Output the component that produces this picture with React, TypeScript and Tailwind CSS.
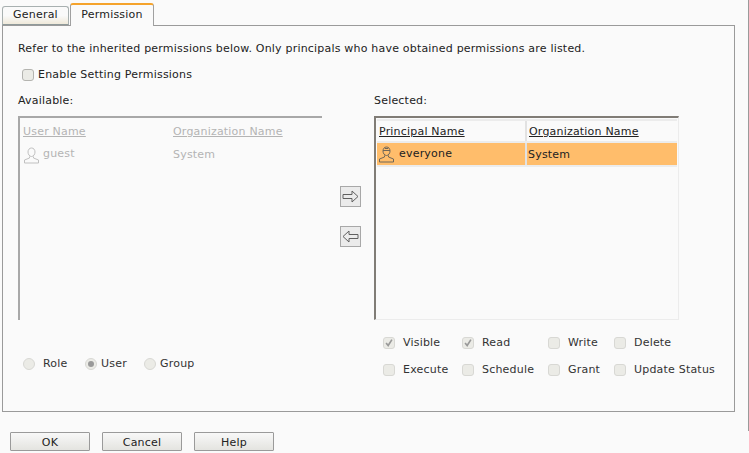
const Person = ({ className, cap }: { className: string; cap?: boolean }) => (
  <svg viewBox="0 0 17 17" className={className} fill="none" stroke="currentColor" strokeWidth="1">
    <path d="M5 5c0-2.400 1.500-4 3.500-4s3.500 1.600 3.500 4-1.500 4.500-3.500 4.500S5 7.400 5 5z" />
    {cap && <path d="M5 4.500h7M7 2.500h3" />}
    <path d="M6.500 9.500v1.500L1.500 13v3h14v-3l-5-2V9.500" />
  </svg>
);

const Check = ({ label, on }: { label: string; on?: boolean }) => (
  <div className="flex items-center">
    <span className="w-3 h-3 rounded-[3px] bg-[#ebebe6] border border-[#d8d8d4] flex items-center justify-center shrink-0">
      {on && (
        <svg viewBox="0 0 12 12" className="w-3 h-3" fill="none" stroke="#999999" strokeWidth="2">
          <path d="M2.500 6l2.500 3 4.500-7" />
        </svg>
      )}
    </span>
    <span className="ml-[8px] whitespace-nowrap">{label}</span>
  </div>
);

const Radio = ({ label, on, width, gap }: { label: string; on?: boolean; width: string; gap: string }) => (
  <div className={`flex items-center ${width}`}>
    <span className="w-3 h-3 rounded-full bg-[#ebebe6] border border-[#d8d8d4] flex items-center justify-center shrink-0">
      {on && <span className="w-1.5 h-1.5 rounded-full bg-[#999999]" />}
    </span>
    <span className={gap}>{label}</span>
  </div>
);

const Button = ({ label }: { label: string }) => (
  <button className="w-20 h-[19px] pt-[2px] border border-[#9a9a9a] rounded-[1px] bg-gradient-to-b from-[#f8f8f8] to-[#e4e4e0] text-[#222222] leading-none tracking-[0.2px]">
    {label}
  </button>
);

export default function App() {
  return (
    <div className="flex w-[749px] h-[453px] overflow-hidden bg-[#fafafa] text-[11px] leading-[14px] tracking-[0.2px] text-[#222222] font-['DejaVu_Sans','Liberation_Sans',sans-serif]">
      <div className="w-[748px]">
        <div className="flex items-end h-[25px] pl-[2px] pt-[2px]">
          <div className="w-[67px] h-[19px] border border-[#a8b0b0] border-b-[#8f9a9a] rounded-t-[3px] bg-gradient-to-b from-[#fafafa] via-[#fafafa] to-[#efe9da] text-center leading-[15px]">
            General
          </div>
          <div className="w-[84px] h-[23px] ml-[1px] -mb-[1px] border border-b-0 border-[#a0a0a0] border-t-2 border-t-[#f5a32c] rounded-t-[3px] bg-[#fafafa] text-center leading-[19px] relative z-10">
            Permission
          </div>
        </div>
        <div className="w-[733px] h-[387px] ml-[2px] border border-[#9a9a9a] pl-[15px]">
          <div className="pt-[16px] h-[30px] whitespace-nowrap">Refer to the inherited permissions below. Only principals who have obtained permissions are listed.</div>
          <div className="flex items-center mt-[12px] ml-[4px] h-[14px]">
            <span className="w-3 h-3 rounded-[3px] bg-[#ebebe6] border border-[#b4b4b0]" />
            <span className="ml-[4px]">Enable Setting Permissions</span>
          </div>
          <div className="flex mt-[12px]">
            <div className="w-[304px]">
              <div>Available:</div>
              <div className="h-[204px] mt-[8px] border-t-2 border-l-2 border-[#a8a8a8] pt-[7px] pl-[3px] text-[#b4b4b4]">
                <div className="flex h-[18px]">
                  <span className="w-[150px] underline">User Name</span>
                  <span className="underline">Organization Name</span>
                </div>
                <div className="flex items-center h-[24px]">
                  <div className="flex items-center w-[150px]">
                    <Person className="w-[17px] h-[17px] text-[#c0c0c0]" />
                    <span className="ml-[3px] -mt-[3px]">guest</span>
                  </div>
                  <span>System</span>
                </div>
              </div>
              <div className="flex items-center mt-[37px] ml-[5px] h-[14px] text-[#333333]">
                <Radio label="Role" width="w-[62px]" gap="ml-[8px]" />
                <Radio label="User" on width="w-[59px]" gap="ml-[4px]" />
                <Radio label="Group" width="w-[60px]" gap="ml-[4px]" />
              </div>
            </div>
            <div className="w-[52px] pl-[18px] pt-[92px] flex flex-col gap-[19px]">
              <div className="w-[21px] h-[21px] border border-[#a8a8a8] bg-[#ebebeb] flex items-center justify-center">
                <svg viewBox="0 0 17 13" className="w-[17px] h-[13px]" fill="none" stroke="#606060">
                  <path d="M1 4.500h9V1l6 5.500-6 5.500V8.500H1z" />
                </svg>
              </div>
              <div className="w-[21px] h-[21px] border border-[#a8a8a8] bg-[#ebebeb] flex items-center justify-center">
                <svg viewBox="0 0 17 13" className="w-[17px] h-[13px]" fill="none" stroke="#606060">
                  <path d="M16 4.500H7V1L1 6.500 7 12V8.500h9z" />
                </svg>
              </div>
            </div>
            <div className="w-[305px]">
              <div>Selected:</div>
              <div className="h-[204px] mt-[8px] border-t-2 border-l-2 border-[#807c76] border-r border-r-[#ececec] border-b border-b-[#ececec] pt-[1px] pl-[1px] pr-[1px]">
                <div className="flex h-[24px] border-y-2 border-[#ececec] leading-[22px]">
                  <span className="w-[150px] pl-[2px] border-r-2 border-[#e2e2e2] underline">Principal Name</span>
                  <span className="pl-[2px] underline">Organization Name</span>
                </div>
                <div className="flex items-center h-[22px] bg-[#ffbd6b] border-b-2 border-[#ececec] box-content -mb-[2px]">
                  <div className="flex items-center w-[150px] h-full border-r-2 border-[#e2e2e2] pl-[1px]">
                    <Person cap className="w-[17px] h-[17px] text-[#6e6658]" />
                    <span className="ml-[4px] -mt-[1px]">everyone</span>
                  </div>
                  <span className="pl-[1px] pt-[1px]">System</span>
                </div>
              </div>
              <div className="grid grid-cols-[79px_86px_66px_auto] grid-rows-[14px_14px] gap-y-[13px] mt-[16px] ml-[9px] text-[#333333]">
                <Check label="Visible" on />
                <Check label="Read" on />
                <Check label="Write" />
                <Check label="Delete" />
                <Check label="Execute" />
                <Check label="Schedule" />
                <Check label="Grant" />
                <Check label="Update Status" />
              </div>
            </div>
          </div>
        </div>
        <div className="flex gap-3 pl-[10px] mt-[20px]">
          <Button label="OK" />
          <Button label="Cancel" />
          <Button label="Help" />
        </div>
      </div>
      <div className="w-px h-[431px] bg-[#9a9a9a]" />
    </div>
  );
}
